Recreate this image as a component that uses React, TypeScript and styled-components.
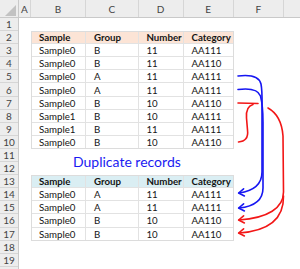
import React from 'react'
import styled, { createGlobalStyle } from 'styled-components'

const ROW_H = 13.1
const HEAD_H = 18
const GUTTER_W = 19

// the last entry is the column that runs off the right edge, drawn blank
const COLUMNS = [
    { name: 'A', width: 12 },
    { name: 'B', width: 55 },
    { name: 'C', width: 52.5 },
    { name: 'D', width: 45 },
    { name: 'E', width: 50.5 },
    { name: 'F', width: 49.5 },
    { name: '', width: 40 },
]

// widths of B..E, where both tables live
const TABLE_COLS = COLUMNS.slice(1, 5).map((c) => c.width)

const HEADINGS = ['Sample', 'Group', 'Number', 'Category']

const ALL_RECORDS = [
    ['Sample0', 'B', '11', 'AA111'],
    ['Sample0', 'B', '11', 'AA110'],
    ['Sample0', 'A', '11', 'AA111'],
    ['Sample0', 'A', '11', 'AA111'],
    ['Sample0', 'B', '10', 'AA110'],
    ['Sample1', 'B', '10', 'AA111'],
    ['Sample1', 'B', '11', 'AA111'],
    ['Sample0', 'B', '10', 'AA110'],
]

const DUPLICATES = [
    ['Sample0', 'A', '11', 'AA111'],
    ['Sample0', 'A', '11', 'AA111'],
    ['Sample0', 'B', '10', 'AA110'],
    ['Sample0', 'B', '10', 'AA110'],
]

const GlobalStyle = createGlobalStyle`
    html, body {
        margin: 0;
        padding: 0;
        background: #ffffff;
    }
    body {
        font-family: Lato, 'Liberation Sans', sans-serif;
    }
`

const Window = styled.div`
    position: relative;
    display: flex;
    flex-direction: column;
    width: 300px;
    height: 269px;
    overflow: hidden;
    background: #ffffff;
`

const HeaderBar = styled.div`
    display: flex;
    flex: none;
    height: ${HEAD_H}px;
    background: #ededed;
    border-bottom: 1px solid #c9c9c9;
    box-sizing: border-box;
`

const Corner = styled.div`
    width: ${GUTTER_W}px;
    flex: none;
    display: flex;
    align-items: flex-end;
    justify-content: flex-end;
    padding: 0 2px 1px 0;
    box-sizing: border-box;
    border-right: 1px solid #c9c9c9;
`

const ColumnHead = styled.div<{ $width: number }>`
    width: ${(p) => p.$width}px;
    flex: none;
    display: flex;
    align-items: flex-end;
    justify-content: center;
    padding-bottom: 2px;
    box-sizing: border-box;
    border-right: 1px solid #d6d6d6;
    font-size: 10px;
    color: #444444;
`

const Body = styled.div`
    flex: 1;
    display: flex;
`

const Gutter = styled.div`
    width: ${GUTTER_W}px;
    flex: none;
    display: flex;
    flex-direction: column;
    background: #ededed;
    border-right: 1px solid #c9c9c9;
    box-sizing: border-box;
`

const RowLabel = styled.div`
    height: ${ROW_H}px;
    flex: none;
    display: flex;
    align-items: center;
    justify-content: center;
    border-bottom: 1px solid #d6d6d6;
    box-sizing: border-box;
    font-size: 10px;
    color: #444444;
`

const Cells = styled.div`
    flex: 1;
    display: flex;
    flex-direction: column;
`

const BlankRows = styled.div<{ $rows: number }>`
    height: ${(p) => p.$rows * ROW_H}px;
    flex: none;
`

const Table = styled.div`
    margin-left: ${COLUMNS[0].width}px;
    display: grid;
    grid-template-columns: ${TABLE_COLS.map((w) => `${w}px`).join(' ')};
    grid-auto-rows: ${ROW_H}px;
    width: ${TABLE_COLS.reduce((a, b) => a + b, 0)}px;
    outline: 1px solid #dcdcdc;
    outline-offset: -1px;
`

const Cell = styled.div<{ $fill?: string; $head?: boolean }>`
    display: flex;
    align-items: center;
    padding-left: 8px;
    box-sizing: border-box;
    border-right: 1px solid #e2e2e2;
    border-bottom: 1px solid #e2e2e2;
    background: ${(p) => p.$fill ?? '#ffffff'};
    font-size: 9.7px;
    font-weight: ${(p) => (p.$head ? 700 : 400)};
    color: #141414;
    white-space: nowrap;
`

const CaptionRow = styled.div`
    height: ${ROW_H * 2}px;
    flex: none;
    padding: 6px 0 0 54px;
    box-sizing: border-box;
`

const Caption = styled.div`
    font-size: 14px;
    line-height: 14px;
    color: #1a1af2;
    white-space: nowrap;
`

const Arrows = styled.svg`
    position: absolute;
    top: 0;
    left: 0;
    pointer-events: none;
`

const RecordTable = ({ fill, rows }: { fill: string; rows: string[][] }) => (
    <Table>
        {HEADINGS.map((h) => (
            <Cell key={h} $fill={fill} $head>
                {h}
            </Cell>
        ))}
        {rows.map((r, i) => r.map((v, j) => <Cell key={`${i}-${j}`}>{v}</Cell>))}
    </Table>
)

const BLUE = '#1616f2'
const RED = '#f21616'

const App = () => (
    <Window>
        <GlobalStyle />
        <HeaderBar>
            <Corner>
                <svg width="11" height="11" viewBox="0 0 11 11">
                    <polygon points="11,0 11,11 0,11" fill="#c2c2c2" />
                </svg>
            </Corner>
            {COLUMNS.map((c, i) => (
                <ColumnHead key={i} $width={c.width}>
                    {c.name}
                </ColumnHead>
            ))}
        </HeaderBar>
        <Body>
            <Gutter>
                {Array.from({ length: 19 }, (_, i) => (
                    <RowLabel key={i}>{i + 1}</RowLabel>
                ))}
            </Gutter>
            <Cells>
                <BlankRows $rows={1} />
                <RecordTable fill="#fce4d6" rows={ALL_RECORDS} />
                <CaptionRow>
                    <Caption>Duplicate records</Caption>
                </CaptionRow>
                <RecordTable fill="#daeef3" rows={DUPLICATES} />
                <BlankRows $rows={2} />
            </Cells>
        </Body>
        <Arrows width="300" height="269" viewBox="0 0 300 269">
            <g fill="none" strokeWidth="1.6" strokeLinecap="round" strokeLinejoin="round">
                {/* rows 5 and 6 go down to rows 14 and 15 */}
                <g stroke={BLUE}>
                    <path d="M238,76 C250,74.5 259,76 261,84 C262.5,92 262,100 262,110 L262,172 C262,185 253,191 239,193" />
                    <path d="M238,89.5 C250,88 258,89 260.5,96 C262.5,104 263,112 263,122 L263,188 C263,200 254,206.5 239,208" />
                    <path d="M243.6,188.8 L238.6,193 L244.4,196" />
                    <path d="M243.6,203.8 L238.6,208 L244.4,211" />
                </g>
                {/* rows 7 to 10 go down to rows 16 and 17 */}
                <g stroke={RED}>
                    <path d="M238,103 L258,103.5" />
                    <path d="M253,104.5 C247,106 246,111 246.5,118 L247.5,130 C248.5,138 245,141.5 238.5,142" />
                    <path d="M268,108 C277,113 282,122 283,136 L283.5,192 C283.5,208 268,218 239,220" />
                    <path d="M283.5,196 C284,220 268,231 239,233" />
                    <path d="M243.6,215.8 L238.6,220 L244.4,223" />
                    <path d="M243.6,228.8 L238.6,233 L244.4,236" />
                </g>
            </g>
        </Arrows>
    </Window>
)

export default App
